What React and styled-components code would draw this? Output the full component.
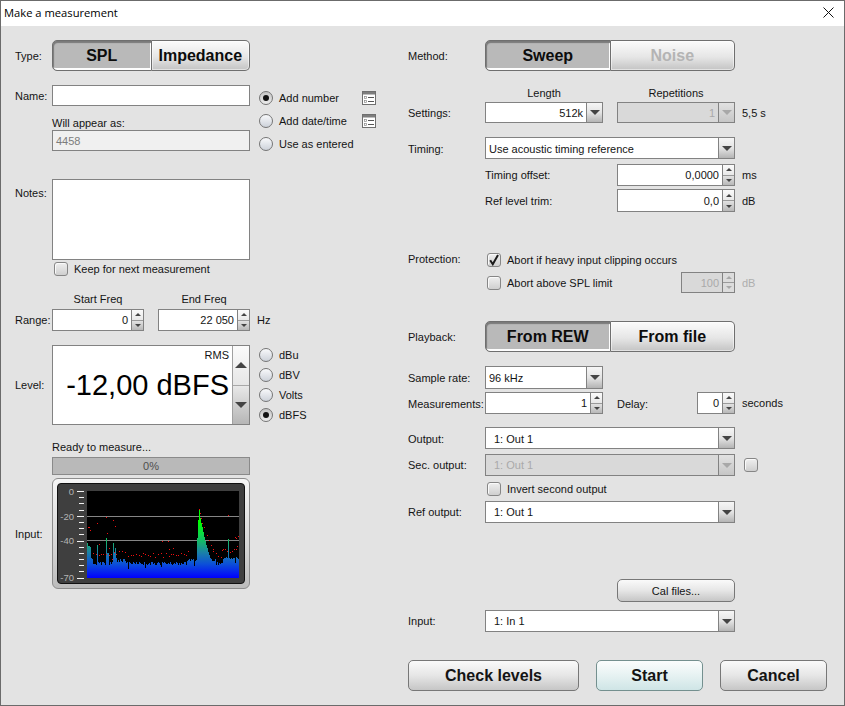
import React from 'react';
import styled, { createGlobalStyle } from 'styled-components';

/* Styled Components */

const GlobalStyle = createGlobalStyle`
  html, body {
    margin: 0;
    padding: 0;
    background: #e3e3e3;
  }
`

const Window = styled.div`
  box-sizing: border-box;
  width: 845px;
  height: 706px;
  display: flex;
  flex-direction: column;
  overflow: hidden;
  background: #e3e3e3;
  border: 1px solid #6b6b6b;
  color: #141414;
  font-family: "Liberation Sans", Arial, sans-serif;
  font-size: 11px;
`

const TitleBar = styled.div`
  box-sizing: border-box;
  height: 25px;
  flex: none;
  display: flex;
  align-items: center;
  justify-content: space-between;
  padding: 0 10px 2px 3px;
  background: #fff;
  color: #000;
  font-family: "Open Sans", sans-serif;
  font-size: 11.2px;
`

const Body = styled.div`
  display: flex;
  padding-left: 14px;
`

const LeftPane = styled.div`
  width: 393px;
  flex: none;
  display: flex;
  flex-direction: column;
`

const RightPane = styled.div`
  width: 419px;
  flex: none;
  display: flex;
  flex-direction: column;
`

const Row = styled.div`
  display: flex;
  align-items: ${p => p.$align || 'center'};
  margin-top: ${p => p.$top || 0}px;
  height: ${p => (p.$h ? p.$h + 'px' : 'auto')};
`

const Label = styled.div`
  flex: none;
  width: ${p => p.$w}px;
  margin-left: ${p => p.$left || 0}px;
  padding-top: ${p => p.$pad || 0}px;
  padding-bottom: ${p => p.$padBottom || 0}px;
  white-space: nowrap;
`

const Stack = styled.div`
  display: flex;
  flex-direction: column;
  flex: none;
  width: ${p => p.$w}px;
`

const Caption = styled.div`
  flex: none;
  width: ${p => p.$w}px;
  margin-left: ${p => p.$left || 0}px;
  text-align: center;
  white-space: nowrap;
`

const WillAppear = styled.div`
  height: 24px;
  display: flex;
  align-items: flex-end;
  padding-bottom: 1px;
  box-sizing: border-box;
`

const Unit = styled.div`
  margin-left: 7px;
  white-space: nowrap;
  color: ${p => (p.$off ? '#aeaeae' : 'inherit')};
`

const Gap = styled.div`
  flex: none;
  width: ${p => p.$w}px;
`

const TextBox = styled.div`
  box-sizing: border-box;
  flex: none;
  width: ${p => p.$w || 198}px;
  height: ${p => p.$h || 21}px;
  padding: 0 3px;
  display: flex;
  align-items: center;
  background: ${p => (p.$off ? '#f0f0f0' : '#fff')};
  color: #7c7c7c;
  border: 1px solid #828282;
`

const SegGroup = styled.div`
  display: flex;
  flex: none;
  width: ${p => p.$w}px;
  height: 31px;
`

const SegButton = styled.div`
  box-sizing: border-box;
  flex: 1;
  display: flex;
  align-items: center;
  justify-content: center;
  padding-top: 1px;
  font-size: 16px;
  font-weight: bold;
  color: ${p => (p.$off ? '#b4b4b4' : '#0c0c0c')};
  border: 1px solid #6f6f6f;
  border-radius: ${p => (p.$first ? '5px 0 0 5px' : '0 5px 5px 0')};
  border-left-width: ${p => (p.$first ? 1 : 0)}px;
  background: ${p =>
    p.$active ? '#b9b9b9' : 'linear-gradient(#fbfbfb, #e6e6e6 55%, #c4c4c4)'};
  box-shadow: ${p =>
    p.$active
      ? 'inset 1px 2px 1px #7a7a7a, inset -1px -2px 0 #fdfdfd'
      : 'inset 0 0 0 1px rgba(255,255,255,.5)'};
`

const Push = styled.div`
  box-sizing: border-box;
  flex: none;
  width: ${p => p.$w}px;
  height: ${p => p.$h || 31}px;
  margin-left: ${p => p.$left || 0}px;
  display: flex;
  align-items: center;
  justify-content: center;
  padding-top: ${p => (p.$small ? 0 : 1)}px;
  border: 1px solid ${p => (p.$accent ? '#74908f' : '#777')};
  border-radius: 5px;
  font-size: ${p => (p.$small ? '11px' : '16px')};
  font-weight: ${p => (p.$small ? 'normal' : 'bold')};
  background: ${p =>
    p.$accent
      ? 'linear-gradient(#fbfdfd, #e6f2f2 50%, #cfe5e6)'
      : 'linear-gradient(#fafafa, #e6e6e6 50%, #c6c6c6)'};
`

const ComboBox = styled.div`
  box-sizing: border-box;
  flex: none;
  width: ${p => p.$w}px;
  height: ${p => p.$h || 22}px;
  display: flex;
  background: ${p => (p.$off ? '#d9d9d9' : '#fff')};
  color: ${p => (p.$off ? '#a9a9a9' : 'inherit')};
  border: 1px solid #828282;
`

const ComboText = styled.div`
  flex: 1;
  display: flex;
  align-items: center;
  justify-content: ${p => (p.$right ? 'flex-end' : 'flex-start')};
  padding: ${p => (p.$nudge ? 2 : 0)}px ${p => (p.$right ? 3 : 0)}px 0 ${p => (p.$right ? 0 : p.$indent || 3)}px;
`

const ComboButton = styled.div`
  box-sizing: border-box;
  flex: none;
  width: 16px;
  display: flex;
  align-items: center;
  justify-content: center;
  border-left: 1px solid #828282;
  background: ${p =>
    p.$off ? 'linear-gradient(#e2e2e2, #c6c6c6)' : 'linear-gradient(#f6f6f6, #e4e4e4 50%, #b4b4b4)'};
`

const Tri = styled.span`
  width: 0;
  height: 0;
  border-left: ${p => p.$size}px solid transparent;
  border-right: ${p => p.$size}px solid transparent;
  ${p => (p.$up ? 'border-bottom' : 'border-top')}: ${p => p.$tall}px solid ${p => (p.$off ? '#a8a8a8' : '#444')};
`

const SpinWrap = styled.div`
  box-sizing: border-box;
  flex: none;
  width: ${p => p.$w}px;
  height: ${p => p.$h || 22}px;
  margin-left: ${p => p.$left || 0}px;
  display: flex;
  background: ${p => (p.$off ? '#d9d9d9' : '#fff')};
  color: ${p => (p.$off ? '#a9a9a9' : 'inherit')};
  border: 1px solid #828282;
`

const SpinText = styled.div`
  flex: 1;
  display: flex;
  align-items: center;
  justify-content: flex-end;
  padding-right: 3px;
`

const SpinColumn = styled.div`
  box-sizing: border-box;
  flex: none;
  width: 12px;
  display: flex;
  flex-direction: column;
  border-left: 1px solid #828282;
`

const SpinHalf = styled.div`
  box-sizing: border-box;
  flex: 1;
  display: flex;
  align-items: center;
  justify-content: center;
  background: ${p =>
    p.$off
      ? '#dcdcdc'
      : p.$up
      ? 'linear-gradient(#fbfbfb, #e8e8e8)'
      : 'linear-gradient(#e2e2e2, #b8b8b8)'};
  border-top: ${p => (p.$up ? 'none' : '1px solid #9a9a9a')};
`

const CheckBox = styled.div`
  box-sizing: border-box;
  flex: none;
  width: 14px;
  height: 14px;
  margin-left: ${p => p.$left || 0}px;
  display: flex;
  align-items: center;
  justify-content: center;
  border: 1px solid #868686;
  border-radius: 3px;
  background: linear-gradient(#efefef, #cfcfcf);
  box-shadow: inset 1px 1px 0 #fafafa;
`

const CheckLine = styled.div`
  flex: none;
  width: ${p => (p.$w ? p.$w + 'px' : 'auto')};
  margin-left: 6px;
  white-space: nowrap;
`

const RadioColumn = styled.div`
  display: flex;
  flex-direction: column;
  margin-left: 9px;
  padding-top: ${p => p.$pad || 0}px;
  gap: ${p => p.$gap}px;
`

const RadioLine = styled.div`
  display: flex;
  align-items: center;
  height: ${p => p.$h}px;
  white-space: nowrap;
`

const RadioDot = styled.div`
  box-sizing: border-box;
  flex: none;
  width: 14px;
  height: 14px;
  margin-right: 6px;
  display: flex;
  align-items: center;
  justify-content: center;
  border: 1px solid #757575;
  border-radius: 50%;
  background: ${p =>
    p.$on ? 'linear-gradient(#c4c4c4, #ececec)' : 'linear-gradient(#f8f9fb, #cdd2da)'};
  &::after {
    content: '';
    display: ${p => (p.$on ? 'block' : 'none')};
    width: 6px;
    height: 6px;
    border-radius: 50%;
    background: #111;
  }
`

const RadioText = styled.div`
  width: ${p => (p.$w ? p.$w + 'px' : 'auto')};
`

const ListGlyph = styled.svg`
  flex: none;
`

const NotesBox = styled.div`
  box-sizing: border-box;
  flex: none;
  width: 198px;
  height: 81px;
  background: #fff;
  border: 1px solid #828282;
`

const LevelBox = styled.div`
  box-sizing: border-box;
  flex: none;
  width: 198px;
  height: 80px;
  display: flex;
  background: #fff;
  border: 1px solid #828282;
`

const LevelDisplay = styled.div`
  flex: 1;
  display: flex;
  flex-direction: column;
  align-items: flex-end;
  padding: 3px 3px 0 0;
`

const LevelValue = styled.div`
  margin-top: 6px;
  font-size: 29px;
  line-height: 36px;
  color: #000;
  white-space: nowrap;
`

const LevelStepper = styled.div`
  box-sizing: border-box;
  flex: none;
  width: 17px;
  display: flex;
  flex-direction: column;
  border-left: 1px solid #a0a0a0;
`

const LevelStep = styled.div`
  flex: 1;
  display: flex;
  align-items: center;
  justify-content: center;
  background: ${p =>
    p.$up ? 'linear-gradient(#fbfbfb, #e6e6e6)' : 'linear-gradient(#e8e8e8, #b6b6b6)'};
  border-top: ${p => (p.$up ? 'none' : '1px solid #a8a8a8')};
`

const Progress = styled.div`
  box-sizing: border-box;
  width: 198px;
  height: 18px;
  margin-top: 3px;
  display: flex;
  align-items: center;
  justify-content: center;
  background: #b9b9b9;
  border: 1px solid #8a8a8a;
  color: #4e4e4e;
`

const MeterBezel = styled.div`
  box-sizing: border-box;
  flex: none;
  width: 198px;
  height: 111px;
  padding: 4px;
  border: 1px solid #8d8d8d;
  border-radius: 6px;
  background: linear-gradient(#f6f6f6, #d6d6d6 60%, #bcbcbc);
`

const MeterPanel = styled.div`
  box-sizing: border-box;
  width: 188px;
  height: 101px;
  overflow: hidden;
  border: 1px solid #111;
  border-radius: 4px;
  background: #3f3f3f;
`

const Footer = styled.div`
  display: flex;
  margin-top: 28px;
`

/* Spectrum data, in screen pixels */

const PLOT = { x0: 87, x1: 239, y0: 491, y1: 578 };

const PEAK = {
  196: 560, 197: 538, 198: 520, 199: 509, 200: 518, 201: 523, 202: 527, 203: 532,
  204: 537, 205: 541, 206: 545, 207: 548, 208: 552, 209: 555, 210: 558,
  87: 543, 88: 546, 89: 546, 90: 547, 91: 558, 92: 559, 97: 545, 106: 538, 107: 553,
  108: 553, 113: 543, 114: 553, 115: 548, 116: 558, 228: 539,
};

const OUTLIERS = [
  [88, 527], [89, 527], [90, 530], [97, 523], [99, 544], [106, 517], [107, 533],
  [109, 548], [112, 559], [113, 520], [115, 526], [162, 541], [168, 541], [169, 549],
  [173, 548], [199, 509], [200, 513], [201, 518], [202, 523], [204, 527], [207, 535],
  [209, 540], [211, 545], [213, 549], [222, 550], [228, 515], [235, 537], [236, 538],
  [237, 546], [238, 536],
];

const noise = (n) => {
  const v = Math.sin(n * 12.9898) * 43758.5453;
  return v - Math.floor(v);
};

const floorAt = (x) => {
  let base = 563;
  if (x > 113 && x < 126) base = 560;
  if (x > 186 && x < 196) base = 560;
  if (x > 210 && x < 216) base = 560;
  if (x > 222) base = 558;
  return base;
};

const barPath = () => {
  let d = '';
  for (let x = PLOT.x0; x < PLOT.x1; x++) {
    const jitter = noise(x) * 3.5 - 1.5 + (noise(x + 300) > 0.93 ? 4 : 0);
    const top = PEAK[x] || Math.round(floorAt(x) + jitter);
    d += `M${x} ${top}h1V${PLOT.y1}h-1Z`;
  }
  return d;
};

const dotPath = () => {
  let d = '';
  for (let x = PLOT.x0 + 6; x < PLOT.x1; x += 2 + Math.round(noise(x + 50))) {
    if (x > 190 && x < 212) continue;
    const y = Math.round(floorAt(x) - 10 + noise(x + 100) * 4);
    d += `M${x} ${y}h1v1h-1Z`;
  }
  OUTLIERS.forEach(([x, y]) => {
    d += `M${x} ${y}h1v1h-1Z`;
  });
  return d;
};

const TICK_STEP = 6.19;

/* Components */

const CloseIcon = () => (
  <svg width="11" height="11" viewBox="0 0 11 11">
    <path d="M0.5 0.5L10.5 10.5M10.5 0.5L0.5 10.5" stroke="#111" strokeWidth="1" fill="none" />
  </svg>
);

const ListIcon = () => (
  <ListGlyph width="14" height="14" viewBox="0 0 14 14">
    <rect x="0.5" y="0.5" width="13" height="13" fill="#fff" stroke="#6f6f6f" />
    <rect x="1" y="1" width="12" height="2.5" fill="#7d7d7d" />
    <rect x="2.5" y="5.5" width="2" height="2" fill="#fff" stroke="#8a8a8a" strokeWidth="0.7" />
    <rect x="2.5" y="9.5" width="2" height="2" fill="#fff" stroke="#8a8a8a" strokeWidth="0.7" />
    <path d="M6 6.5H12M6 10.5H12" stroke="#555" strokeWidth="1" />
  </ListGlyph>
);

const CheckMark = () => (
  <svg width="12" height="12" viewBox="0 0 12 12">
    <path d="M2.2 6.2L4.8 10.2L10 1" stroke="#1a1a1a" strokeWidth="2" fill="none" />
  </svg>
);

const Combo = ({ w, h, off, right, indent, nudge, children }) => (
  <ComboBox $w={w} $h={h} $off={off}>
    <ComboText $right={right} $indent={indent} $nudge={nudge}>{children}</ComboText>
    <ComboButton $off={off}><Tri $size={5} $tall={5} $off={off} /></ComboButton>
  </ComboBox>
);

const Spin = ({ w, h, left, off, children }) => (
  <SpinWrap $w={w} $h={h} $left={left} $off={off}>
    <SpinText>{children}</SpinText>
    <SpinColumn>
      <SpinHalf $up $off={off}><Tri $up $size={3} $tall={3} $off={off} /></SpinHalf>
      <SpinHalf $off={off}><Tri $size={3} $tall={3} $off={off} /></SpinHalf>
    </SpinColumn>
  </SpinWrap>
);

const Check = ({ checked, left }) => (
  <CheckBox $left={left}>{checked && <CheckMark />}</CheckBox>
);

const Radio = ({ on, h, w, children, icon }) => (
  <RadioLine $h={h}>
    <RadioDot $on={on} />
    <RadioText $w={w}>{children}</RadioText>
    {icon && <ListIcon />}
  </RadioLine>
);

const Segmented = ({ w, left, right, rightOff }) => (
  <SegGroup $w={w}>
    <SegButton $first $active>{left}</SegButton>
    <SegButton $off={rightOff}>{right}</SegButton>
  </SegGroup>
);

const Spectrum = () => (
  <svg width="186" height="99" viewBox="58 484 186 99">
    <defs>
      <linearGradient id="specFill" gradientUnits="userSpaceOnUse" x1="0" y1="578" x2="0" y2="522">
        <stop offset="0" stopColor="#0000ff" />
        <stop offset="0.25" stopColor="#0c50d8" />
        <stop offset="0.45" stopColor="#1a80a8" />
        <stop offset="0.6" stopColor="#18a878" />
        <stop offset="0.78" stopColor="#0cd848" />
        <stop offset="1" stopColor="#00ff00" />
      </linearGradient>
    </defs>
    <rect x={PLOT.x0} y={PLOT.y0} width={PLOT.x1 - PLOT.x0} height={PLOT.y1 - PLOT.y0} fill="#000" />
    <path d="M87 516.5H239M87 540.5H239" stroke="#858585" strokeWidth="1" />
    <path d={barPath()} fill="url(#specFill)" shapeRendering="crispEdges" />
    <path d={dotPath()} fill="#f01010" shapeRendering="crispEdges" />
    {Array.from({ length: 15 }, (_, i) => {
      const major = i === 0 || i === 4 || i === 8 || i === 14;
      const y = Math.round(491 + i * TICK_STEP) + 0.5;
      return (
        <path key={i} d={`M${major ? 77 : 79} ${y}H84`} stroke="#f2f2f2" strokeWidth="1" />
      );
    })}
    {[['0', 495], ['-20', 520], ['-40', 544], ['-70', 581]].map(([t, y]) => (
      <text
        key={t}
        x="74"
        y={y}
        textAnchor="end"
        fontSize="9.5"
        fill="#b4b4b4"
        fontFamily="Liberation Sans, sans-serif"
      >
        {t}
      </text>
    ))}
  </svg>
);

const App = () => (
  <Window>
    <GlobalStyle />
    <TitleBar>
      <span>Make a measurement</span>
      <CloseIcon />
    </TitleBar>
    <Body>
      <LeftPane>
        <Row $top={14} $h={31}>
          <Label $w={37}>Type:</Label>
          <Segmented w={198} left="SPL" right="Impedance" />
        </Row>

        <Row $top={14} $align="flex-start">
          <Label $w={37} $pad={5}>Name:</Label>
          <Stack $w={198}>
            <TextBox />
            <WillAppear>Will appear as:</WillAppear>
            <TextBox $off>4458</TextBox>
          </Stack>
          <RadioColumn $pad={6} $gap={9}>
            <Radio on h={14} w={83} icon>Add number</Radio>
            <Radio h={14} w={83} icon>Add date/time</Radio>
            <Radio h={14} w={97}>Use as entered</Radio>
          </RadioColumn>
        </Row>

        <Row $top={28} $align="flex-start">
          <Label $w={37} $pad={8}>Notes:</Label>
          <NotesBox />
        </Row>
        <Row $top={2} $h={14}>
          <Check left={39} />
          <CheckLine>Keep for next measurement</CheckLine>
        </Row>

        <Row $top={17} $h={16} $align="flex-start">
          <Caption $w={92} $left={37}>Start Freq</Caption>
          <Caption $w={92} $left={14}>End Freq</Caption>
        </Row>
        <Row $h={22}>
          <Label $w={37}>Range:</Label>
          <Spin w={92}>0</Spin>
          <Spin w={92} left={14}>22 050</Spin>
          <Unit>Hz</Unit>
        </Row>

        <Row $top={14}>
          <Label $w={37}>Level:</Label>
          <LevelBox>
            <LevelDisplay>
              <div>RMS</div>
              <LevelValue>-12,00 dBFS</LevelValue>
            </LevelDisplay>
            <LevelStepper>
              <LevelStep $up><Tri $up $size={6} $tall={6} /></LevelStep>
              <LevelStep><Tri $size={6} $tall={6} /></LevelStep>
            </LevelStepper>
          </LevelBox>
          <RadioColumn $gap={6}>
            <Radio h={14}>dBu</Radio>
            <Radio h={14}>dBV</Radio>
            <Radio h={14}>Volts</Radio>
            <Radio on h={14}>dBFS</Radio>
          </RadioColumn>
        </Row>

        <Row $top={15} $h={14}>
          <Gap $w={37} />
          <div>Ready to measure...</div>
        </Row>
        <Row>
          <Gap $w={37} />
          <Progress>0%</Progress>
        </Row>
        <Row $top={3}>
          <Label $w={37}>Input:</Label>
          <MeterBezel>
            <MeterPanel><Spectrum /></MeterPanel>
          </MeterBezel>
        </Row>
      </LeftPane>

      <RightPane>
        <Row $top={14} $h={31}>
          <Label $w={77}>Method:</Label>
          <Segmented w={250} left="Sweep" right="Noise" rightOff />
        </Row>

        <Row $top={15} $h={14}>
          <Caption $w={118} $left={77}>Length</Caption>
          <Caption $w={118} $left={14}>Repetitions</Caption>
        </Row>
        <Row $top={2} $h={21}>
          <Label $w={77}>Settings:</Label>
          <Combo w={118} h={21} right>512k</Combo>
          <Gap $w={14} />
          <Combo w={118} h={21} right off>1</Combo>
          <Unit>5,5 s</Unit>
        </Row>

        <Row $top={14} $h={22}>
          <Label $w={77} $pad={2}>Timing:</Label>
          <Combo w={250} nudge>Use acoustic timing reference</Combo>
        </Row>
        <Row $top={5} $h={22}>
          <Label $w={132} $left={77}>Timing offset:</Label>
          <Spin w={118}>0,0000</Spin>
          <Unit>ms</Unit>
        </Row>
        <Row $top={3} $h={23}>
          <Label $w={132} $left={77}>Ref level trim:</Label>
          <Spin w={118} h={23}>0,0</Spin>
          <Unit>dB</Unit>
        </Row>

        <Row $top={41} $h={14}>
          <Label $w={77} $padBottom={2}>Protection:</Label>
          <Check checked left={2} />
          <CheckLine>Abort if heavy input clipping occurs</CheckLine>
        </Row>
        <Row $top={5} $h={21}>
          <Gap $w={77} />
          <Check left={2} />
          <CheckLine $w={174}>Abort above SPL limit</CheckLine>
          <Spin w={54} h={21} off>100</Spin>
          <Unit $off>dB</Unit>
        </Row>

        <Row $top={28} $h={31}>
          <Label $w={77}>Playback:</Label>
          <Segmented w={250} left="From REW" right="From file" />
        </Row>

        <Row $top={14} $h={23}>
          <Label $w={77}>Sample rate:</Label>
          <Combo w={118} h={23}>96 kHz</Combo>
        </Row>
        <Row $top={3} $h={22}>
          <Label $w={77} $pad={2}>Measurements:</Label>
          <Spin w={118}>1</Spin>
          <Label $w={80} $left={14} $pad={2}>Delay:</Label>
          <Spin w={38}>0</Spin>
          <Unit>seconds</Unit>
        </Row>

        <Row $top={13} $h={22}>
          <Label $w={77} $pad={2}>Output:</Label>
          <Combo w={250} indent={8} nudge>1: Out 1</Combo>
        </Row>
        <Row $top={5} $h={22}>
          <Label $w={77}>Sec. output:</Label>
          <Combo w={250} indent={8} off>1: Out 1</Combo>
          <Check left={9} />
        </Row>
        <Row $top={6} $h={14}>
          <Gap $w={77} />
          <Check left={2} />
          <CheckLine>Invert second output</CheckLine>
        </Row>
        <Row $top={5} $h={22}>
          <Label $w={77}>Ref output:</Label>
          <Combo w={250} indent={8}>1: Out 1</Combo>
        </Row>

        <Row $top={56} $h={23}>
          <Push $w={118} $h={23} $left={209} $small>Cal files...</Push>
        </Row>
        <Row $top={8} $h={22}>
          <Label $w={77}>Input:</Label>
          <Combo w={250} indent={8}>1: In 1</Combo>
        </Row>

        <Footer>
          <Push $w={171}>Check levels</Push>
          <Push $w={107} $left={17} $accent>Start</Push>
          <Push $w={107} $left={17}>Cancel</Push>
        </Footer>
      </RightPane>
    </Body>
  </Window>
);

export default App;
